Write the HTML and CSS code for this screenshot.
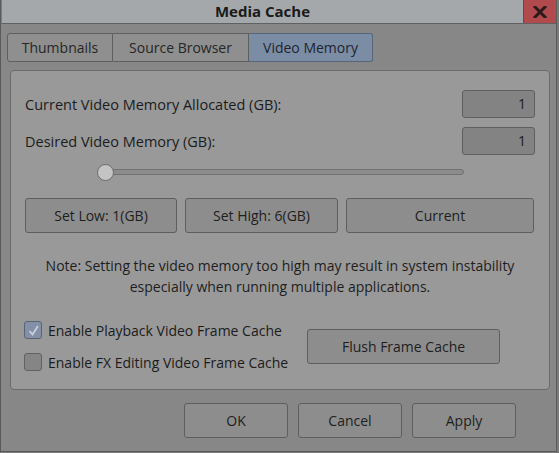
FILE: index.html
```html
<!DOCTYPE html>
<html>
<head>
<meta charset="utf-8">
<title>Media Cache</title>
<link rel="stylesheet" href="styles.css">
</head>
<body>
<div class="window">
  <div class="titlebar">
    <div class="title">Media Cache</div>
    <div class="close"><svg width="14" height="12" viewBox="0 0 14 12"><path d="M2 1 L12 11 M12 1 L2 11" stroke="#2a1a1a" stroke-width="3" stroke-linecap="square"/></svg></div>
  </div>
  <div class="body">
    <div class="tabs">
      <div class="tab t1">Thumbnails</div>
      <div class="tab t2">Source Browser</div>
      <div class="tab t3 active">Video Memory</div>
    </div>
    <div class="panel">
      <div class="row">
        <span class="label">Current Video Memory Allocated (GB):</span>
        <span class="field">1</span>
      </div>
      <div class="row row2">
        <span class="label">Desired Video Memory (GB):</span>
        <span class="field">1</span>
      </div>
      <div class="slider">
        <div class="track"></div>
        <div class="thumb"></div>
      </div>
      <div class="btnrow">
        <div class="btn">Set Low: 1(GB)</div>
        <div class="btn">Set High: 6(GB)</div>
        <div class="btn">Current</div>
      </div>
      <div class="note">Note: Setting the video memory too high may result in system instability<br>especially when running multiple applications.</div>
      <div class="cache">
        <div class="checks">
          <div class="check"><span class="box checked"><svg width="13" height="13" viewBox="0 0 13 13"><path d="M2.5 7 L5.5 10.5 L11 2" stroke="#c9cfdc" stroke-width="1.8" fill="none"/></svg></span>Enable Playback Video Frame Cache</div>
          <div class="check"><span class="box"></span>Enable FX Editing Video Frame Cache</div>
        </div>
        <div class="btn flush">Flush Frame Cache</div>
      </div>
    </div>
    <div class="footer">
      <div class="btn fbtn">OK</div>
      <div class="btn fbtn">Cancel</div>
      <div class="btn fbtn">Apply</div>
    </div>
  </div>
</div>
</body>
</html>
```
FILE: styles.css
```css
* { box-sizing: border-box; }
html, body { margin: 0; padding: 0; }
body {
  width: 559px;
  height: 453px;
  background: #7a7a7a;
  font-family: "Open Sans", "DejaVu Sans", sans-serif;
  font-size: 14px;
  color: #1c1c1c;
  overflow: hidden;
}
.window {
  width: 557px;
  height: 452px;
  border: 1px solid #5a5a5a;
  border-top: none;
  background: #878787;
  display: flex;
  flex-direction: column;
}
.titlebar {
  height: 24px;
  background: #a4a8ab;
  border-bottom: 1px solid #5e6062;
  border-left: 1px solid #7a7d80;
  display: flex;
  align-items: stretch;
}
.title {
  flex: 1;
  text-align: center;
  font-weight: bold;
  font-size: 15px;
  line-height: 23px;
  color: #1a1a1a;
}
.close {
  width: 33px;
  background: #b04a4c;
  display: flex;
  align-items: center;
  justify-content: center;
  border-left: 1px solid #8a3a3a;
}
.body {
  flex: 1;
  padding: 9px 8px 0 6px;
  display: flex;
  flex-direction: column;
}
.tabs {
  display: flex;
  height: 29px;
}
.tab {
  height: 29px;
  line-height: 27px;
  text-align: center;
  background: #8f8f8f;
  border: 1px solid #5f5f5f;
  color: #262626;
}
.t1 { width: 106px; border-radius: 3px 0 0 3px; }
.t2 { width: 136px; border-left: none; }
.t3 { width: 124px; border-left: none; border-radius: 0 3px 3px 0; }
.tab.active { background: #7b8da5; border-color: #56657a; color: #1e2430; }
.panel {
  margin: 8px 0 0 3px;
  width: 540px;
  height: 320px;
  background: #999999;
  border: 1px solid #6c6c6c;
  border-radius: 4px;
  padding: 19px 14px 0 14px;
}
.row {
  display: flex;
  justify-content: space-between;
  align-items: center;
  height: 28px;
}
.label { font-size: 14.5px; }
.row2 { margin-top: 9px; }
.field {
  width: 73px;
  height: 28px;
  background: #838383;
  border: 1px solid #5f5f5f;
  border-radius: 3px;
  text-align: right;
  padding-right: 8px;
  line-height: 26px;
}
.slider {
  position: relative;
  height: 16px;
  margin-top: 9px;
}
.track {
  position: absolute;
  left: 80px;
  width: 359px;
  top: 5px;
  height: 6px;
  background: #8c8c8c;
  border: 1px solid #727272;
  border-radius: 3px;
}
.thumb {
  position: absolute;
  left: 72px;
  top: 0;
  width: 17px;
  height: 17px;
  border-radius: 50%;
  background: #c4c4c4;
  border: 1.5px solid #6a6a6a;
}
.btnrow {
  display: grid;
  grid-template-columns: 152px 153px 1fr;
  column-gap: 8px;
  margin-top: 18px;
  margin-right: 1px;
}
.btn {
  height: 35px;
  line-height: 33px;
  text-align: center;
  background: #8d8d8d;
  border: 1px solid #5e5e5e;
  border-radius: 3px;
  color: #1e1e1e;
}
.note {
  margin-top: 22px;
  text-align: center;
  line-height: 21px;
  color: #1e1e1e;
}
.cache {
  display: flex;
  align-items: center;
  margin-top: 17px;
}
.checks {
  width: 282px;
}
.check {
  display: flex;
  align-items: center;
  height: 32px;
  margin-left: -1px;
}
.box {
  width: 18px;
  height: 18px;
  border: 1px solid #626262;
  border-radius: 3px;
  background: #858585;
  margin-right: 6px;
  display: flex;
  align-items: center;
  justify-content: center;
}
.box.checked { background: #8490a8; border-color: #5a6478; }
.flush {
  width: 193px;
  height: 35px;
}
.footer {
  display: flex;
  gap: 10px;
  margin: 13px 0 0 177px;
}
.fbtn { width: 104px; }
```
